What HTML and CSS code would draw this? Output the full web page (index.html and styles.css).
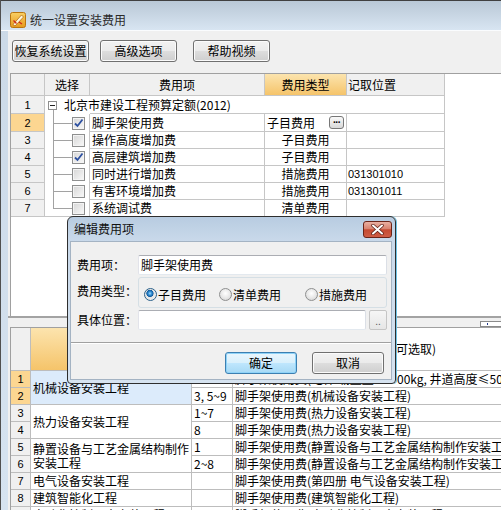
FILE: index.html
```html
<!DOCTYPE html>
<html>
<head>
<meta charset="utf-8">
<title>统一设置安装费用</title>
<link rel="stylesheet" href="styles.css">
</head>
<body>
<div class="window">
  <div class="titlebar">
    <svg class="app-icon" width="16" height="16" viewBox="0 0 16 16">
      <defs><linearGradient id="ig" x1="0" y1="0" x2="0" y2="1"><stop offset="0" stop-color="#f9cf64"/><stop offset="1" stop-color="#e69a1e"/></linearGradient></defs>
      <rect x="0.5" y="0.5" width="15" height="15" rx="2" fill="url(#ig)" stroke="#b9750f"/>
      <path d="M3 12.5 L11.5 3 L13.5 5 L5 14 Z" fill="#fff6dc" stroke="#a8600c" stroke-width="0.7"/>
      <path d="M3.5 8.5 L6.5 11.5 M9 10 L12 12" stroke="#d0281a" stroke-width="1.3" fill="none"/>
    </svg>
    <span class="title">统一设置安装费用</span>
  </div>
  <div class="client">
    <div class="toolbar">
      <button class="btn">恢复系统设置</button>
      <button class="btn b2">高级选项</button>
      <button class="btn b3">帮助视频</button>
    </div>
    <div class="upper-pane">
      <div class="ugrid">
        <div class="hc"></div>
        <div class="hc">选择</div>
        <div class="hc">费用项</div>
        <div class="hc hl">费用类型</div>
        <div class="hc left">记取位置</div>

        <div class="rn">1</div>
        <div class="root"><span class="expander"></span><span class="root-text">北京市建设工程预算定额(2012)</span></div>

        <div class="rn sel">2</div>
        <div class="tree"><span class="cb checked"><svg width="11" height="11" viewBox="0 0 11 11"><path d="M2 5.5 L4.5 8 L9.5 1.5" stroke="#2d50a0" stroke-width="1.8" fill="none"/></svg></span></div>
        <div class="c">脚手架使用费</div>
        <div class="c type-edit">子目费用<span class="ell">···</span></div>
        <div class="c"></div>

        <div class="rn">3</div>
        <div class="tree"><span class="cb"></span></div>
        <div class="c">操作高度增加费</div>
        <div class="c mid">子目费用</div>
        <div class="c"></div>

        <div class="rn">4</div>
        <div class="tree"><span class="cb checked"><svg width="11" height="11" viewBox="0 0 11 11"><path d="M2 5.5 L4.5 8 L9.5 1.5" stroke="#2d50a0" stroke-width="1.8" fill="none"/></svg></span></div>
        <div class="c">高层建筑增加费</div>
        <div class="c mid">子目费用</div>
        <div class="c"></div>

        <div class="rn">5</div>
        <div class="tree"><span class="cb"></span></div>
        <div class="c">同时进行增加费</div>
        <div class="c mid">措施费用</div>
        <div class="c code">031301010</div>

        <div class="rn">6</div>
        <div class="tree"><span class="cb"></span></div>
        <div class="c">有害环境增加费</div>
        <div class="c mid">措施费用</div>
        <div class="c code">031301011</div>

        <div class="rn">7</div>
        <div class="tree last"><span class="cb"></span></div>
        <div class="c">系统调试费</div>
        <div class="c mid">清单费用</div>
        <div class="c"></div>
      </div>
    </div>
    <div class="splitter"></div>
    <div class="lower-pane">
      <div class="hscroll"><span class="thumb"></span></div>
      <div class="lgrid">
        <div class="lh"></div>
        <div class="lh hl">取费专业</div>
        <div class="lh">章节</div>
        <div class="lh note">对应费用项(可选取)</div>

        <div class="ln sel">1</div>
        <div class="lc span2 chosen">机械设备安装工程</div>
        <div class="lc">2</div>
        <div class="lc"><span class="shift">脚手架使用费(电梯 载重量≤1</span>00kg, 井道高度≤50m)</div>

        <div class="ln sel">2</div>
        <div class="lc">3, 5~9</div>
        <div class="lc">脚手架使用费(机械设备安装工程)</div>

        <div class="ln">3</div>
        <div class="lc span2">热力设备安装工程</div>
        <div class="lc">1~7</div>
        <div class="lc">脚手架使用费(热力设备安装工程)</div>

        <div class="ln">4</div>
        <div class="lc">8</div>
        <div class="lc">脚手架使用费(热力设备安装工程)</div>

        <div class="ln">5</div>
        <div class="lc span2 wrap">静置设备与工艺金属结构制作安装工程</div>
        <div class="lc">1</div>
        <div class="lc">脚手架使用费(静置设备与工艺金属结构制作安装工程)</div>

        <div class="ln">6</div>
        <div class="lc">2~8</div>
        <div class="lc">脚手架使用费(静置设备与工艺金属结构制作安装工程)</div>

        <div class="ln">7</div>
        <div class="lc">电气设备安装工程</div>
        <div class="lc"></div>
        <div class="lc">脚手架使用费(第四册 电气设备安装工程)</div>

        <div class="ln">8</div>
        <div class="lc">建筑智能化工程</div>
        <div class="lc"></div>
        <div class="lc">脚手架使用费(建筑智能化工程)</div>

        <div class="ln">9</div>
        <div class="lc">自动化控制仪表安装工程</div>
        <div class="lc"></div>
        <div class="lc">脚手架使用费(自动化控制仪表安装工程)</div>
      </div>
    </div>
  </div>

  <div class="dialog">
    <div class="dlg-title">
      <span>编辑费用项</span>
      <span class="close"><svg width="13" height="11" viewBox="0 0 13 11"><path d="M2 1.5 L11 9.5 M11 1.5 L2 9.5" stroke="#5a1d14" stroke-width="3.4" stroke-linecap="round"/><path d="M2 1.5 L11 9.5 M11 1.5 L2 9.5" stroke="#ffffff" stroke-width="2" stroke-linecap="round"/></svg></span>
    </div>
    <div class="dlg-client">
      <div class="form">
        <span class="lbl">费用项：</span>
        <div class="field">脚手架使用费</div>
        <span class="lbl up">费用类型：</span>
        <div class="rgroup">
          <span class="ri w1"><span class="rb on"></span>子目费用</span>
          <span class="ri w2"><span class="rb"></span>清单费用</span>
          <span class="ri"><span class="rb"></span>措施费用</span>
        </div>
        <span class="lbl">具体位置：</span>
        <div class="field-row"><div class="field short"></div><span class="browse">..</span></div>
      </div>
      <div class="sep"></div>
      <div class="dlg-buttons">
        <button class="dbtn primary">确定</button>
        <button class="dbtn">取消</button>
      </div>
    </div>
  </div>
</div>
</body>
</html>
```
FILE: styles.css
```css
* { box-sizing: border-box; }
html, body { margin: 0; padding: 0; }
body {
  width: 501px; height: 510px; overflow: hidden;
  font-family: "Noto Sans CJK SC", "Noto Sans", sans-serif;
  font-size: 12px; line-height: 16px; color: #000;
  background: #f0f0f0;
}
.window {
  position: relative; width: 501px; height: 510px; overflow: hidden;
  border-left: 1px solid #505050;
  background: linear-gradient(#cbd9e7, #d6e3f0);
}
.titlebar {
  height: 31px; border-top: 1px solid #404040; border-bottom: 1px solid #fafcfe;
  padding: 8px 0 0 9px; display: flex; align-items: center; gap: 4px;
  background: linear-gradient(#b9c8d6, #d8e5f2);
}
.app-icon { display: block; }
.title { color: #2a2a2a; }

.client { margin-left: 7px; height: 479px; background: #f0f0f0; }
.toolbar { height: 42px; display: flex; padding: 9px 0 0 4px; }
.btn {
  font: inherit; color: #000; width: 77px; height: 22px; padding: 0;
  border: 1px solid #707070; border-radius: 3px;
  background: linear-gradient(#f2f2f2 0%, #ebebeb 48%, #dddddd 52%, #cfcfcf 100%);
  box-shadow: inset 0 0 0 1px #fbfbfb;
}
.b2 { margin-left: 11px; }
.b3 { margin-left: 16px; }

.upper-pane {
  margin-left: 2px; height: 243px; background: #fff;
  border-top: 1px solid #a0a0a0; border-left: 1px solid #a0a0a0;
}
.ugrid {
  display: grid; width: 434px;
  grid-template-columns: 34px 45px 175px 82px 98px;
  grid-template-rows: 22px 18px 18px 17px 17px 17px 17px 17px;
}
.ugrid > div {
  border-right: 1px solid #c6c6c6; border-bottom: 1px solid #c6c6c6;
  display: flex; align-items: center; white-space: nowrap; overflow: hidden;
}
.hc { background: #f0f0f0; justify-content: center; }
.hc.left { justify-content: flex-start; padding-left: 1px; }
.hl { background: linear-gradient(#fce4ae, #f5c46a) !important; }
.rn { background: #f0f0f0; justify-content: center; font-family: "Liberation Sans", sans-serif; font-size: 11px; }
.rn.sel, .ln.sel { background: #fcd691; }
.ugrid > .root {
  grid-column: span 4; border-bottom: none; padding-left: 3px;
  background:
    linear-gradient(#c6c6c6, #c6c6c6) right bottom / calc(100% - 45px) 1px no-repeat,
    linear-gradient(#a2a2a2, #a2a2a2) 8px 13px / 1px 100% no-repeat;
}
.expander {
  width: 9px; height: 9px; border: 1px solid #8f8f8f;
  display: inline-block; margin-top: 1px;
  background: linear-gradient(#222, #222) center / 5px 1px no-repeat, #fff;
}
.root-text { margin-left: 7px; }
.ugrid > .tree {
  border-bottom: none;
  background:
    linear-gradient(#a2a2a2, #a2a2a2) 8px 0 / 1px 100% no-repeat,
    linear-gradient(#a2a2a2, #a2a2a2) 8px 50% / 19px 1px no-repeat;
}
.ugrid > .tree.last {
  border-bottom: 1px solid #c6c6c6;
  background:
    linear-gradient(#a2a2a2, #a2a2a2) 8px 0 / 1px 50% no-repeat,
    linear-gradient(#a2a2a2, #a2a2a2) 8px 50% / 19px 1px no-repeat;
}
.cb {
  width: 13px; height: 13px; margin-left: 27px; border: 1px solid #8e8f8f;
  background: linear-gradient(135deg, #d6d6d6, #f9f9f9);
  box-shadow: inset 0 0 0 1px #f4f4f4;
  display: flex; align-items: center; justify-content: center;
}
.cb svg { display: block; }
.c { padding-left: 2px; }
.c.mid { justify-content: center; padding-left: 0; }
.c.type-edit { justify-content: space-between; padding-right: 2px; }
.ell {
  width: 15px; height: 13px; border: 1px solid #777; border-radius: 3px;
  background: linear-gradient(#fafafa, #d8d8d8);
  font-size: 10px; line-height: 11px; text-align: center; letter-spacing: -1px;
  font-family: "Liberation Sans", sans-serif; font-weight: bold;
}
.c.code { font-family: "Liberation Sans", sans-serif; font-size: 11px; padding-left: 1px; }

.splitter { height: 2px; background: #a3a3a3; }
.lower-pane { height: 192px; padding-left: 2px; }
.hscroll { height: 9px; display: flex; justify-content: flex-end; padding-top: 3px; }
.thumb {
  width: 24px; height: 6px; border: 1px solid #8a8a8a; margin-right: -3px;
  background: radial-gradient(circle, #223a8a 0 1px, transparent 1px) 5px 0 / 3px 4px no-repeat, #fff;
}
.lgrid {
  display: grid; background: #fff;
  border-top: 1px solid #a0a0a0; border-left: 1px solid #a0a0a0;
  grid-template-columns: 20px 161px 41px 320px;
  grid-template-rows: 43px repeat(9, 17px);
}
.lgrid > div {
  border-right: 1px solid #bdbdbd; border-bottom: 1px solid #bdbdbd;
  display: flex; align-items: center; white-space: nowrap; overflow: hidden;
}
.lh { background: #f0f0f0; justify-content: center; }
.lh.note { background: #fff; justify-content: flex-start; padding-left: 99px; }
.ln { background: #f0f0f0; justify-content: center; font-family: "Liberation Sans", sans-serif; font-size: 11px; }
.lc { padding-left: 2px; }
.span2 { grid-row: span 2; }
.chosen { background: #dcebfb; }
.lgrid > .wrap { white-space: normal; line-height: 14px; padding-top: 1px; }
.shift { display: inline-block; width: 162px; overflow: hidden; white-space: nowrap; vertical-align: top; }

.dialog {
  position: absolute; left: 66px; top: 216px; width: 329px; height: 168px;
  border: 1px solid #2e2e2e; border-radius: 6px 6px 4px 4px;
  padding: 0 3px 3px 2px; display: flex; flex-direction: column;
  background: linear-gradient(#b8cce1 0, #c9d9ea 24px, #d6e3f0 100%);
  box-shadow: 1px 0 0 #6fc3e6;
}
.dlg-title {
  height: 24px; display: flex; align-items: center; justify-content: space-between;
  padding-left: 4px; color: #111;
}
.close {
  width: 29px; height: 17px; border: 1px solid #6b2418; border-radius: 3px;
  background: linear-gradient(#eab0a2 0%, #d98370 45%, #c54a31 52%, #cf5d45 100%);
  display: flex; align-items: center; justify-content: center;
}
.close svg { display: block; }
.dlg-client {
  flex: 1; background: #f0f0f0; border: 1px solid #a4b3c3;
  display: flex; flex-direction: column;
}
.form {
  display: grid; grid-template-columns: 61px 249px; row-gap: 2px; align-items: center;
  padding: 13px 0 0 6px;
}
.lbl { white-space: nowrap; }
.lbl.up { margin-bottom: 3px; }
.field {
  height: 20px; background: #fff; border: 1px solid;
  border-color: #abadb3 #dbdfe6 #e3e9ef #e2e3ea; border-radius: 2px;
  padding-left: 2px; display: flex; align-items: center;
}
.field-row { display: flex; gap: 3px; }
.field.short { width: 228px; }
.browse {
  width: 18px; height: 20px; border: 1px solid #c5c5c5; border-radius: 2px;
  background: linear-gradient(#f6f6f6, #e6e6e6); color: #555;
  font-size: 10px; line-height: 22px; text-align: center; font-family: "Liberation Sans", sans-serif;
}
.rgroup {
  height: 31px; border: 1px solid #d5dfe5; border-radius: 3px;
  display: flex; align-items: center; padding: 4px 0 0 5px;
}
.ri { display: flex; align-items: center; gap: 1px; white-space: nowrap; }
.ri.w1 { width: 75px; }
.ri.w2 { width: 86px; }
.rb {
  width: 13px; height: 13px; border-radius: 50%; border: 1px solid #8e8f8f;
  background: radial-gradient(circle at 50% 40%, #ffffff 0, #e9e9e9 50%, #cfcfcf 100%);
}
.rb.on {
  border-color: #2c628b;
  background: radial-gradient(circle at 45% 40%, #a6dcff 0, #3a95d8 1.6px, #0e5a9e 3.3px, #e4e4e4 3.9px, #f6f6f6 100%);
}
.sep { margin-top: 12px; height: 2px; border-top: 1px solid #a0a0a0; border-bottom: 1px solid #ffffff; }
.dlg-buttons { display: flex; justify-content: flex-end; gap: 15px; padding: 8px 7px 0 0; }
.dbtn {
  font: inherit; color: #000; width: 72px; height: 22px; padding: 0;
  border: 1px solid #707070; border-radius: 3px;
  background: linear-gradient(#f2f2f2 0%, #ebebeb 48%, #dddddd 52%, #cfcfcf 100%);
  box-shadow: inset 0 0 0 1px #fbfbfb;
}
.dbtn.primary {
  border-color: #3c7fb1;
  background: linear-gradient(#eaf6fd 0%, #d9f0fc 48%, #bee6fd 52%, #a7d9f5 100%);
  box-shadow: inset 0 0 0 1px #8fd3f8;
}
```
